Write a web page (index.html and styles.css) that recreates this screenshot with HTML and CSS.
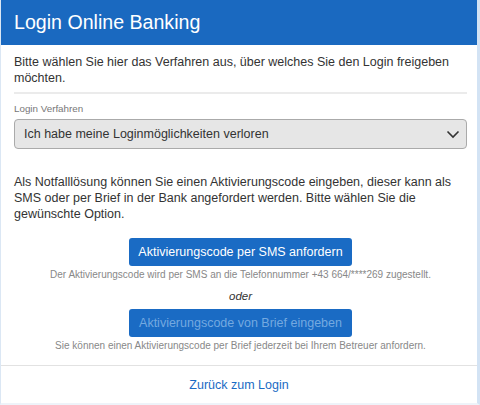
FILE: index.html
```html
<!DOCTYPE html>
<html lang="de">
<head>
    <meta charset="UTF-8">
    <meta name="viewport" content="width=device-width, initial-scale=1.0">
    <title>Login Online Banking</title>
    <link rel="stylesheet" href="styles.css">
</head>
<body>
<div class="panel">
    <header class="panel-head">
        <h1>Login Online Banking</h1>
    </header>

    <div class="panel-body">
        <p class="intro">Bitte wählen Sie hier das Verfahren aus, über welches Sie den Login freigeben möchten.</p>
        <hr class="sep">

        <label class="field-label" for="verfahren">Login Verfahren</label>
        <div class="select">
            <span>Ich habe meine Loginmöglichkeiten verloren</span>
            <svg width="14" height="9" viewBox="0 0 14 9"><path d="M1.5 1.5 L7 7 L12.5 1.5" fill="none" stroke="#333" stroke-width="1.6"/></svg>
        </div>

        <p class="info">Als Notfalllösung können Sie einen Aktivierungscode eingeben, dieser kann als SMS oder per Brief in der Bank angefordert werden. Bitte wählen Sie die gewünschte Option.</p>

        <div class="options">
            <button class="btn">Aktivierungscode per SMS anfordern</button>
            <p class="hint">Der Aktivierungscode wird per SMS an die Telefonnummer +43 664/****269 zugestellt.</p>
            <p class="or">oder</p>
            <button class="btn disabled">Aktivierungscode von Brief eingeben</button>
            <p class="hint">Sie können einen Aktivierungscode per Brief jederzeit bei Ihrem Betreuer anfordern.</p>
        </div>
    </div>

    <footer class="panel-foot">
        <a href="#">Zurück zum Login</a>
    </footer>
</div>
</body>
</html>
```

FILE: styles.css
```css
body { margin: 0; font-family: "Liberation Sans", Arial, sans-serif; color: #333; background: #fff; }
.panel { width: 476px; height: 403px; border-left: 1px solid #dbe7f4; border-right: 3px solid #d3e3f4; border-bottom: 2px solid #eef3f9; display: flex; flex-direction: column; }
.panel-head { background: #1a69c0; height: 45px; display: flex; align-items: center; padding: 0 13px; }
.panel-head h1 { margin: 0; color: #fff; font-weight: normal; font-size: 19.6px; }
.panel-body { padding: 9px 10px 0 13px; flex: 1; }
.intro { margin: 0; font-size: 12.5px; line-height: 16px; }
.sep { border: none; border-top: 2px solid #ebebeb; margin: 6px 0 0 0; }
.field-label { display: block; font-size: 9.8px; color: #777; margin-top: 9px; }
.select {
    margin-top: 5px;
    height: 28px;
    border: 1px solid #aaa;
    border-radius: 4px;
    background: #e6e6e6;
    display: flex;
    align-items: center;
    justify-content: space-between;
    padding: 0 6px 0 9px;
    font-size: 12.5px;
}
.info { margin: 25px 0 0 0; font-size: 12.5px; line-height: 16px; }
.options { display: flex; flex-direction: column; align-items: center; margin-top: 16px; }
.btn {
    font-family: inherit;
    font-size: 12.5px;
    color: #fff;
    background: #1a6bc4;
    border: none;
    border-radius: 3px;
    width: 223px;
    height: 28px;
    white-space: nowrap;
}
.btn.disabled { color: #74a9e0; }
.hint { margin: 3px 0 0 0; font-size: 10px; color: #888; }
.or { margin: 10px 0 7px 0; font-size: 11.5px; font-style: italic; }
.panel-foot { border-top: 1px solid #e2e2e2; height: 37px; display: flex; align-items: center; justify-content: center; }
.panel-foot a { color: #1a6bc4; text-decoration: none; font-size: 12.5px; }
```
